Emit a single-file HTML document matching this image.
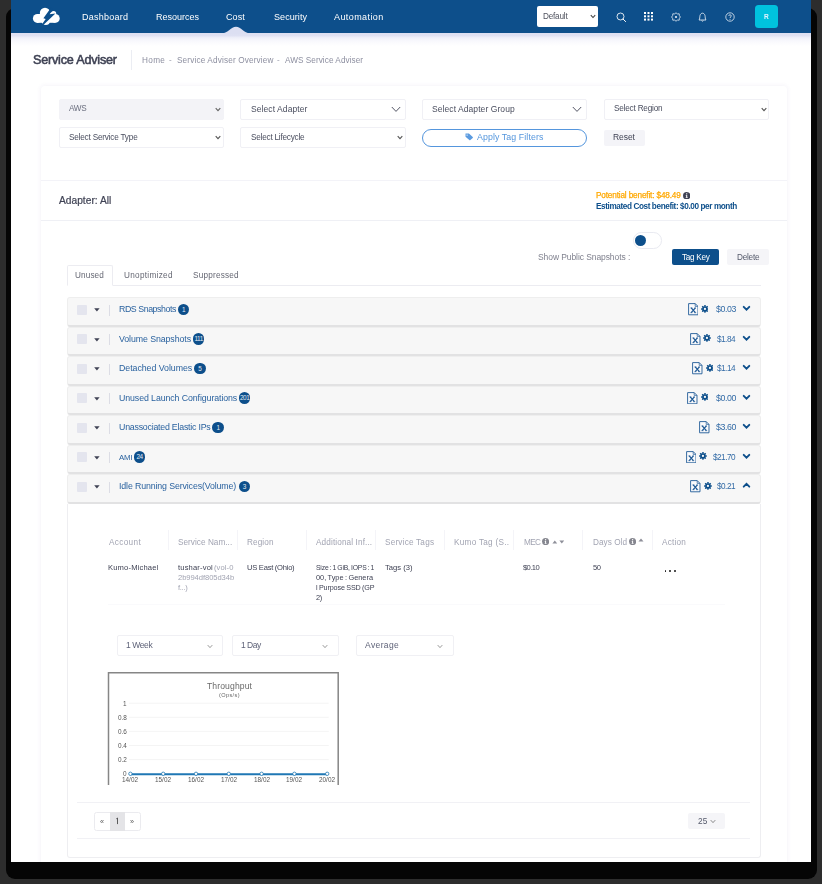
<!DOCTYPE html>
<html>
<head>
<meta charset="utf-8">
<title>Service Adviser</title>
<style>
*{box-sizing:border-box;margin:0;padding:0}
html,body{width:822px;height:884px;overflow:hidden;background:#2d2d2d;font-family:"Liberation Sans",sans-serif;}
#cv{position:absolute;left:0;top:0;width:822px;height:884px;overflow:hidden;background:#2d2d2d}
#cv *{position:absolute}
.shadow{left:5.5px;top:8px;width:811px;height:870.5px;background:#050505;border-radius:9px}
.page{left:11px;top:0;width:800px;height:862px;background:#fff;overflow:hidden}
.nav{left:11px;top:0;width:800px;height:33px;background:#0d4f8b}
.navfade{left:11px;top:33px;width:800px;height:13px;background:linear-gradient(#dcdff2 0,#dfe1f3 20%,#eeeff9 36%,#f8f8fd 60%,#fff 100%)}
.t{white-space:nowrap;line-height:1;will-change:transform}
.card{background:#fff;border-radius:4px;box-shadow:0 0 4px 1px rgba(82,63,140,.055)}
.sel{height:21px;border:1px solid #f0f0f5;border-radius:2px;background:#fff}
.row{left:67px;width:693.5px;height:29.5px;background:#f7f7f7;border:1px solid #eeeeee;border-bottom:2px solid #e2e2e3;border-radius:3px}
.cb{left:77px;width:10px;height:10px;background:#e4e5ee;border-radius:1px}
.sep{left:109px;width:1px;height:11px;background:#dcdde5}
.badge{width:11.6px;height:11.6px;border-radius:50%;background:#0d4f8b;color:#e4ecf4;font-size:6.4px;text-align:center;line-height:11.6px;letter-spacing:-0.4px;overflow:hidden}
.vs{top:530px;width:1px;height:20px;background:#f4f4f8}
.hl{height:1px;background:#eeeef3}

</style>
</head>
<body>
<div id="cv">
<div class="shadow"></div>
<div class="page"><div id="in" style="left:-11px;top:0;width:822px;height:884px">
<div class="nav"></div><div class="navfade"></div>
<svg style="left:222px;top:26px" width="28" height="8" viewBox="0 0 28 8"><path d="M0 7.3 C6 7.3 9 0.8 14 0.8 C19 0.8 22 7.3 28 7.3 L28 8 L0 8 Z" fill="#dcdff2"/></svg>
<svg style="left:31px;top:6px" width="31" height="21" viewBox="31 6 31 21">
<g fill="#fff"><circle cx="37.4" cy="18.4" r="4.5"/><circle cx="45.0" cy="12.9" r="5.2"/><circle cx="55.3" cy="18.4" r="4.4"/><circle cx="53.6" cy="13.6" r="2.6"/><circle cx="45.8" cy="21" r="4.1"/><rect x="37" y="14" width="18.5" height="8.8"/><circle cx="51" cy="16" r="3.5"/></g>
<path d="M51.2 7.6 L52.8 9.2 L49.7 14.3 L55.4 13.4 L42.8 25.6 L41.7 24.8 L45.7 19.0 L43.4 18.2 Z" fill="#0d4f8b"/>
</svg>
<div style="left:537px;top:6px;width:61px;height:20.5px;background:#fff;border-radius:2px"></div>
<svg style="left:589.8px;top:13.8px" width="6" height="5" viewBox="0 0 6 5"><path d="M0.8 1.1 L3 3.5 L5.2 1.1" fill="none" stroke="#444" stroke-width="1.1"/></svg>
<svg style="left:616px;top:11.5px" width="11" height="11" viewBox="0 0 11 11"><circle cx="4.5" cy="4.5" r="3.5" fill="none" stroke="#fff" stroke-width="0.85"/><path d="M7 7 L9.6 9.6" stroke="#fff" stroke-width="1" stroke-linecap="round"/></svg>
<svg style="left:643.8px;top:12.3px" width="10" height="9" viewBox="0 0 10 9"><g fill="#fff"><rect x="0" y="0" width="2" height="2"/><rect x="3.5" y="0" width="2" height="2"/><rect x="7" y="0" width="2" height="2"/><rect x="0" y="3.3" width="2" height="2"/><rect x="3.5" y="3.3" width="2" height="2"/><rect x="7" y="3.3" width="2" height="2"/><rect x="0" y="6.6" width="2" height="2"/><rect x="3.5" y="6.6" width="2" height="2"/><rect x="7" y="6.6" width="2" height="2"/></g></svg>
<svg style="left:670.5px;top:11.6px" width="10" height="10" viewBox="0 0 10 10"><path d="M5 0.8 L6.4 1.9 L8.2 1.8 L8.4 3.6 L9.4 5 L8.4 6.4 L8.2 8.2 L6.4 8.1 L5 9.2 L3.6 8.1 L1.8 8.2 L1.6 6.4 L0.6 5 L1.6 3.6 L1.8 1.8 L3.6 1.9 Z" fill="none" stroke="#e6edf5" stroke-width="0.8"/><circle cx="5" cy="5" r="1.1" fill="#e6edf5"/></svg>
<svg style="left:697.8px;top:11.7px" width="9" height="10" viewBox="0 0 9 10"><path d="M1 8 C2 7 1.6 5 2 3.6 C2.4 2 3.4 1.2 4.5 1.2 C5.6 1.2 6.6 2 7 3.6 C7.4 5 7 7 8 8 Z" fill="none" stroke="#e6edf5" stroke-width="0.85" stroke-linejoin="round"/><path d="M3.6 8.6 C3.8 9.4 5.2 9.4 5.4 8.6" fill="none" stroke="#e6edf5" stroke-width="0.8"/></svg>
<svg style="left:724.5px;top:11.6px" width="10" height="10" viewBox="0 0 10 10"><circle cx="5" cy="5" r="4.2" fill="none" stroke="#e6edf5" stroke-width="0.8"/><path d="M3.7 3.9 C3.7 2.4 6.3 2.4 6.3 3.9 C6.3 4.9 5 4.9 5 6" fill="none" stroke="#e6edf5" stroke-width="0.8"/><circle cx="5" cy="7.3" r="0.5" fill="#e6edf5"/></svg>
<div style="left:755.3px;top:5px;width:22.6px;height:22.8px;background:#00c2de;border-radius:3.5px"></div>
<div style="left:131px;top:50px;width:1px;height:20px;background:#ebedf3"></div>
<div class="card" style="left:41px;top:86px;width:745.5px;height:800px"></div>
<div class="hl" style="left:41px;top:180px;width:745.5px;background:#f3f3f8"></div>
<div class="sel" style="left:58.5px;top:98.5px;width:165.5px;background:#f3f3f7;border-color:#f3f3f7"></div><svg style="left:215px;top:106.5px" width="6" height="5" viewBox="0 0 6 5"><path d="M0.7 1.1 L3 3.6 L5.3 1.1" fill="none" stroke="#666" stroke-width="1.1"/></svg>
<div class="sel" style="left:240px;top:98.5px;width:165.5px"></div><svg style="left:390.5px;top:105.5px" width="10" height="7" viewBox="0 0 10 7"><path d="M0.8 1 L5 5.4 L9.2 1" fill="none" stroke="#3f4254" stroke-width="0.9"/></svg>
<div class="sel" style="left:422px;top:98.5px;width:165px"></div><svg style="left:572px;top:105.5px" width="10" height="7" viewBox="0 0 10 7"><path d="M0.8 1 L5 5.4 L9.2 1" fill="none" stroke="#3f4254" stroke-width="0.9"/></svg>
<div class="sel" style="left:603.5px;top:98.5px;width:165.5px"></div><svg style="left:760.5px;top:106.5px" width="6" height="5" viewBox="0 0 6 5"><path d="M0.7 1.1 L3 3.6 L5.3 1.1" fill="none" stroke="#555" stroke-width="1.1"/></svg>
<div class="sel" style="left:58.5px;top:127px;width:165.5px"></div><svg style="left:215px;top:135px" width="6" height="5" viewBox="0 0 6 5"><path d="M0.7 1.1 L3 3.6 L5.3 1.1" fill="none" stroke="#555" stroke-width="1.1"/></svg>
<div class="sel" style="left:240px;top:127px;width:165.5px"></div><svg style="left:396.5px;top:135px" width="6" height="5" viewBox="0 0 6 5"><path d="M0.7 1.1 L3 3.6 L5.3 1.1" fill="none" stroke="#555" stroke-width="1.1"/></svg>
<div style="left:421.5px;top:128.5px;width:165.5px;height:18px;border:1px solid #5596dd;border-radius:9px;background:#fff"></div>
<svg style="left:465px;top:133.2px" width="8.6" height="7.8" viewBox="0 0 10 9"><path d="M0.6 0.6 L4.6 0.6 L9 4.6 C9.4 5 9.4 5.4 9 5.8 L6.2 8.2 C5.8 8.6 5.4 8.6 5 8.2 L0.6 4.2 Z" fill="#5b9be0"/><circle cx="2.4" cy="2.4" r="0.8" fill="#fff"/></svg>
<div style="left:603.5px;top:130px;width:41px;height:15.5px;background:#f4f4f8;border-radius:2px"></div>
<div class="hl" style="left:41px;top:220px;width:746px;background:#eff0f5"></div>
<svg style="left:682.6999999999999px;top:191.60000000000002px" width="7.4" height="7.4" viewBox="0 0 10 10"><circle cx="5" cy="5" r="5" fill="#3f4254"/><rect x="4.3" y="4.2" width="1.4" height="3.6" fill="#fff"/><rect x="3.7" y="4.2" width="1.2" height="0.8" fill="#fff"/><rect x="3.6" y="7.2" width="2.8" height="0.8" fill="#fff"/><circle cx="5" cy="2.5" r="0.95" fill="#fff"/></svg>
<div style="left:632.5px;top:232px;width:29.5px;height:16.6px;border:1px solid #e9eaf1;border-radius:8.3px;background:#fff"></div>
<div style="left:634.7px;top:234.5px;width:11.5px;height:11.5px;border-radius:50%;background:#0d4f8b"></div>
<div style="left:672px;top:249.3px;width:47px;height:15.5px;background:#0d4f8b;border-radius:2px"></div>
<div style="left:727.2px;top:249.3px;width:41.5px;height:15.5px;background:#f5f5f8;border-radius:2px"></div>
<div class="hl" style="left:67px;top:285px;width:693.5px;background:#ececf1"></div>
<div style="left:67.3px;top:265.2px;width:45.4px;height:20.8px;border:1px solid #ececf1;border-bottom:1px solid #fff;border-radius:2px 2px 0 0;background:#fff"></div>
<div class="row" style="top:297.0px"></div>
<div class="cb" style="top:304.5px"></div>
<svg style="left:93.8px;top:308.0px" width="6" height="4" viewBox="0 0 6 4"><path d="M0.2 0.3 L5.6 0.3 L2.9 3.4 Z" fill="#3f4254"/></svg>
<div class="sep" style="top:304.5px"></div>
<div class="badge" style="left:177.89999999999998px;top:303.6px">1</div>
<svg style="left:687.7px;top:303.4px" width="10.6" height="12.4" viewBox="0 0 10.6 12.4"><path d="M0.6 0.6 L7.2 0.6 L10 3.4 L10 11.8 L0.6 11.8 Z" fill="#fbfbfc" stroke="#1f5a96" stroke-width="0.9" stroke-linejoin="round"/><path d="M7.2 0.6 L7.2 3.4 L10 3.4" fill="none" stroke="#1f5a96" stroke-width="0.7"/><path d="M3.2 4.9 L7.4 9.7 M7.4 4.9 L3.2 9.7" stroke="#1f5a96" stroke-width="1.3"/><path d="M2.4 9.7 L4.4 9.7 M6.2 9.7 L8.2 9.7 M2.4 4.9 L4.4 4.9 M6.4 4.9 L8.0 4.9" stroke="#1f5a96" stroke-width="0.7"/></svg>
<svg style="left:700.6px;top:304.9px" width="7.9" height="7.9" viewBox="0 0 10 10"><g fill="#0d4f8b"><rect x="4.1" y="0.1" width="1.8" height="2.2" rx="0.3" transform="rotate(0 5 5)"/><rect x="4.1" y="0.1" width="1.8" height="2.2" rx="0.3" transform="rotate(45 5 5)"/><rect x="4.1" y="0.1" width="1.8" height="2.2" rx="0.3" transform="rotate(90 5 5)"/><rect x="4.1" y="0.1" width="1.8" height="2.2" rx="0.3" transform="rotate(135 5 5)"/><rect x="4.1" y="0.1" width="1.8" height="2.2" rx="0.3" transform="rotate(180 5 5)"/><rect x="4.1" y="0.1" width="1.8" height="2.2" rx="0.3" transform="rotate(225 5 5)"/><rect x="4.1" y="0.1" width="1.8" height="2.2" rx="0.3" transform="rotate(270 5 5)"/><rect x="4.1" y="0.1" width="1.8" height="2.2" rx="0.3" transform="rotate(315 5 5)"/><circle cx="5" cy="5" r="3.5"/></g><circle cx="5" cy="5" r="1.45" fill="#f7f7f7"/></svg>
<svg style="left:741.8px;top:305.1px" width="9" height="7" viewBox="0 0 9 7"><path d="M1.7 1.8 L4.5 4.6 L7.3 1.8" fill="none" stroke="#0d4f8b" stroke-width="1.9" stroke-linecap="round"/></svg>
<div class="row" style="top:326.5px"></div>
<div class="cb" style="top:334.0px"></div>
<svg style="left:93.8px;top:337.5px" width="6" height="4" viewBox="0 0 6 4"><path d="M0.2 0.3 L5.6 0.3 L2.9 3.4 Z" fill="#3f4254"/></svg>
<div class="sep" style="top:334.0px"></div>
<div class="badge" style="left:192.89999999999998px;top:333.1px">111</div>
<svg style="left:690px;top:332.9px" width="10.6" height="12.4" viewBox="0 0 10.6 12.4"><path d="M0.6 0.6 L7.2 0.6 L10 3.4 L10 11.8 L0.6 11.8 Z" fill="#fbfbfc" stroke="#1f5a96" stroke-width="0.9" stroke-linejoin="round"/><path d="M7.2 0.6 L7.2 3.4 L10 3.4" fill="none" stroke="#1f5a96" stroke-width="0.7"/><path d="M3.2 4.9 L7.4 9.7 M7.4 4.9 L3.2 9.7" stroke="#1f5a96" stroke-width="1.3"/><path d="M2.4 9.7 L4.4 9.7 M6.2 9.7 L8.2 9.7 M2.4 4.9 L4.4 4.9 M6.4 4.9 L8.0 4.9" stroke="#1f5a96" stroke-width="0.7"/></svg>
<svg style="left:703.1px;top:334.4px" width="7.9" height="7.9" viewBox="0 0 10 10"><g fill="#0d4f8b"><rect x="4.1" y="0.1" width="1.8" height="2.2" rx="0.3" transform="rotate(0 5 5)"/><rect x="4.1" y="0.1" width="1.8" height="2.2" rx="0.3" transform="rotate(45 5 5)"/><rect x="4.1" y="0.1" width="1.8" height="2.2" rx="0.3" transform="rotate(90 5 5)"/><rect x="4.1" y="0.1" width="1.8" height="2.2" rx="0.3" transform="rotate(135 5 5)"/><rect x="4.1" y="0.1" width="1.8" height="2.2" rx="0.3" transform="rotate(180 5 5)"/><rect x="4.1" y="0.1" width="1.8" height="2.2" rx="0.3" transform="rotate(225 5 5)"/><rect x="4.1" y="0.1" width="1.8" height="2.2" rx="0.3" transform="rotate(270 5 5)"/><rect x="4.1" y="0.1" width="1.8" height="2.2" rx="0.3" transform="rotate(315 5 5)"/><circle cx="5" cy="5" r="3.5"/></g><circle cx="5" cy="5" r="1.45" fill="#f7f7f7"/></svg>
<svg style="left:741.8px;top:334.6px" width="9" height="7" viewBox="0 0 9 7"><path d="M1.7 1.8 L4.5 4.6 L7.3 1.8" fill="none" stroke="#0d4f8b" stroke-width="1.9" stroke-linecap="round"/></svg>
<div class="row" style="top:356.0px"></div>
<div class="cb" style="top:363.5px"></div>
<svg style="left:93.8px;top:367.0px" width="6" height="4" viewBox="0 0 6 4"><path d="M0.2 0.3 L5.6 0.3 L2.9 3.4 Z" fill="#3f4254"/></svg>
<div class="sep" style="top:363.5px"></div>
<div class="badge" style="left:194.0px;top:362.6px">5</div>
<svg style="left:692.3px;top:362.4px" width="10.6" height="12.4" viewBox="0 0 10.6 12.4"><path d="M0.6 0.6 L7.2 0.6 L10 3.4 L10 11.8 L0.6 11.8 Z" fill="#fbfbfc" stroke="#1f5a96" stroke-width="0.9" stroke-linejoin="round"/><path d="M7.2 0.6 L7.2 3.4 L10 3.4" fill="none" stroke="#1f5a96" stroke-width="0.7"/><path d="M3.2 4.9 L7.4 9.7 M7.4 4.9 L3.2 9.7" stroke="#1f5a96" stroke-width="1.3"/><path d="M2.4 9.7 L4.4 9.7 M6.2 9.7 L8.2 9.7 M2.4 4.9 L4.4 4.9 M6.4 4.9 L8.0 4.9" stroke="#1f5a96" stroke-width="0.7"/></svg>
<svg style="left:705.5px;top:363.9px" width="7.9" height="7.9" viewBox="0 0 10 10"><g fill="#0d4f8b"><rect x="4.1" y="0.1" width="1.8" height="2.2" rx="0.3" transform="rotate(0 5 5)"/><rect x="4.1" y="0.1" width="1.8" height="2.2" rx="0.3" transform="rotate(45 5 5)"/><rect x="4.1" y="0.1" width="1.8" height="2.2" rx="0.3" transform="rotate(90 5 5)"/><rect x="4.1" y="0.1" width="1.8" height="2.2" rx="0.3" transform="rotate(135 5 5)"/><rect x="4.1" y="0.1" width="1.8" height="2.2" rx="0.3" transform="rotate(180 5 5)"/><rect x="4.1" y="0.1" width="1.8" height="2.2" rx="0.3" transform="rotate(225 5 5)"/><rect x="4.1" y="0.1" width="1.8" height="2.2" rx="0.3" transform="rotate(270 5 5)"/><rect x="4.1" y="0.1" width="1.8" height="2.2" rx="0.3" transform="rotate(315 5 5)"/><circle cx="5" cy="5" r="3.5"/></g><circle cx="5" cy="5" r="1.45" fill="#f7f7f7"/></svg>
<svg style="left:741.8px;top:364.1px" width="9" height="7" viewBox="0 0 9 7"><path d="M1.7 1.8 L4.5 4.6 L7.3 1.8" fill="none" stroke="#0d4f8b" stroke-width="1.9" stroke-linecap="round"/></svg>
<div class="row" style="top:385.5px"></div>
<div class="cb" style="top:393.0px"></div>
<svg style="left:93.8px;top:396.5px" width="6" height="4" viewBox="0 0 6 4"><path d="M0.2 0.3 L5.6 0.3 L2.9 3.4 Z" fill="#3f4254"/></svg>
<div class="sep" style="top:393.0px"></div>
<div class="badge" style="left:238.89999999999998px;top:392.1px">201</div>
<svg style="left:687.1px;top:391.9px" width="10.6" height="12.4" viewBox="0 0 10.6 12.4"><path d="M0.6 0.6 L7.2 0.6 L10 3.4 L10 11.8 L0.6 11.8 Z" fill="#fbfbfc" stroke="#1f5a96" stroke-width="0.9" stroke-linejoin="round"/><path d="M7.2 0.6 L7.2 3.4 L10 3.4" fill="none" stroke="#1f5a96" stroke-width="0.7"/><path d="M3.2 4.9 L7.4 9.7 M7.4 4.9 L3.2 9.7" stroke="#1f5a96" stroke-width="1.3"/><path d="M2.4 9.7 L4.4 9.7 M6.2 9.7 L8.2 9.7 M2.4 4.9 L4.4 4.9 M6.4 4.9 L8.0 4.9" stroke="#1f5a96" stroke-width="0.7"/></svg>
<svg style="left:700.6px;top:393.4px" width="7.9" height="7.9" viewBox="0 0 10 10"><g fill="#0d4f8b"><rect x="4.1" y="0.1" width="1.8" height="2.2" rx="0.3" transform="rotate(0 5 5)"/><rect x="4.1" y="0.1" width="1.8" height="2.2" rx="0.3" transform="rotate(45 5 5)"/><rect x="4.1" y="0.1" width="1.8" height="2.2" rx="0.3" transform="rotate(90 5 5)"/><rect x="4.1" y="0.1" width="1.8" height="2.2" rx="0.3" transform="rotate(135 5 5)"/><rect x="4.1" y="0.1" width="1.8" height="2.2" rx="0.3" transform="rotate(180 5 5)"/><rect x="4.1" y="0.1" width="1.8" height="2.2" rx="0.3" transform="rotate(225 5 5)"/><rect x="4.1" y="0.1" width="1.8" height="2.2" rx="0.3" transform="rotate(270 5 5)"/><rect x="4.1" y="0.1" width="1.8" height="2.2" rx="0.3" transform="rotate(315 5 5)"/><circle cx="5" cy="5" r="3.5"/></g><circle cx="5" cy="5" r="1.45" fill="#f7f7f7"/></svg>
<svg style="left:741.8px;top:393.6px" width="9" height="7" viewBox="0 0 9 7"><path d="M1.7 1.8 L4.5 4.6 L7.3 1.8" fill="none" stroke="#0d4f8b" stroke-width="1.9" stroke-linecap="round"/></svg>
<div class="row" style="top:415.0px"></div>
<div class="cb" style="top:422.5px"></div>
<svg style="left:93.8px;top:426.0px" width="6" height="4" viewBox="0 0 6 4"><path d="M0.2 0.3 L5.6 0.3 L2.9 3.4 Z" fill="#3f4254"/></svg>
<div class="sep" style="top:422.5px"></div>
<div class="badge" style="left:212.2px;top:421.6px">1</div>
<svg style="left:699px;top:421.4px" width="10.6" height="12.4" viewBox="0 0 10.6 12.4"><path d="M0.6 0.6 L7.2 0.6 L10 3.4 L10 11.8 L0.6 11.8 Z" fill="#fbfbfc" stroke="#1f5a96" stroke-width="0.9" stroke-linejoin="round"/><path d="M7.2 0.6 L7.2 3.4 L10 3.4" fill="none" stroke="#1f5a96" stroke-width="0.7"/><path d="M3.2 4.9 L7.4 9.7 M7.4 4.9 L3.2 9.7" stroke="#1f5a96" stroke-width="1.3"/><path d="M2.4 9.7 L4.4 9.7 M6.2 9.7 L8.2 9.7 M2.4 4.9 L4.4 4.9 M6.4 4.9 L8.0 4.9" stroke="#1f5a96" stroke-width="0.7"/></svg>
<svg style="left:741.8px;top:423.1px" width="9" height="7" viewBox="0 0 9 7"><path d="M1.7 1.8 L4.5 4.6 L7.3 1.8" fill="none" stroke="#0d4f8b" stroke-width="1.9" stroke-linecap="round"/></svg>
<div class="row" style="top:444.5px"></div>
<div class="cb" style="top:452.0px"></div>
<svg style="left:93.8px;top:455.5px" width="6" height="4" viewBox="0 0 6 4"><path d="M0.2 0.3 L5.6 0.3 L2.9 3.4 Z" fill="#3f4254"/></svg>
<div class="sep" style="top:452.0px"></div>
<div class="badge" style="left:133.79999999999998px;top:451.1px">24</div>
<svg style="left:685.6px;top:450.9px" width="10.6" height="12.4" viewBox="0 0 10.6 12.4"><path d="M0.6 0.6 L7.2 0.6 L10 3.4 L10 11.8 L0.6 11.8 Z" fill="#fbfbfc" stroke="#1f5a96" stroke-width="0.9" stroke-linejoin="round"/><path d="M7.2 0.6 L7.2 3.4 L10 3.4" fill="none" stroke="#1f5a96" stroke-width="0.7"/><path d="M3.2 4.9 L7.4 9.7 M7.4 4.9 L3.2 9.7" stroke="#1f5a96" stroke-width="1.3"/><path d="M2.4 9.7 L4.4 9.7 M6.2 9.7 L8.2 9.7 M2.4 4.9 L4.4 4.9 M6.4 4.9 L8.0 4.9" stroke="#1f5a96" stroke-width="0.7"/></svg>
<svg style="left:699.1px;top:452.4px" width="7.9" height="7.9" viewBox="0 0 10 10"><g fill="#0d4f8b"><rect x="4.1" y="0.1" width="1.8" height="2.2" rx="0.3" transform="rotate(0 5 5)"/><rect x="4.1" y="0.1" width="1.8" height="2.2" rx="0.3" transform="rotate(45 5 5)"/><rect x="4.1" y="0.1" width="1.8" height="2.2" rx="0.3" transform="rotate(90 5 5)"/><rect x="4.1" y="0.1" width="1.8" height="2.2" rx="0.3" transform="rotate(135 5 5)"/><rect x="4.1" y="0.1" width="1.8" height="2.2" rx="0.3" transform="rotate(180 5 5)"/><rect x="4.1" y="0.1" width="1.8" height="2.2" rx="0.3" transform="rotate(225 5 5)"/><rect x="4.1" y="0.1" width="1.8" height="2.2" rx="0.3" transform="rotate(270 5 5)"/><rect x="4.1" y="0.1" width="1.8" height="2.2" rx="0.3" transform="rotate(315 5 5)"/><circle cx="5" cy="5" r="3.5"/></g><circle cx="5" cy="5" r="1.45" fill="#f7f7f7"/></svg>
<svg style="left:741.8px;top:452.6px" width="9" height="7" viewBox="0 0 9 7"><path d="M1.7 1.8 L4.5 4.6 L7.3 1.8" fill="none" stroke="#0d4f8b" stroke-width="1.9" stroke-linecap="round"/></svg>
<div class="row" style="top:474.0px"></div>
<div class="cb" style="top:481.5px"></div>
<svg style="left:93.8px;top:485.0px" width="6" height="4" viewBox="0 0 6 4"><path d="M0.2 0.3 L5.6 0.3 L2.9 3.4 Z" fill="#3f4254"/></svg>
<div class="sep" style="top:481.5px"></div>
<div class="badge" style="left:238.5px;top:480.6px">3</div>
<svg style="left:690.2px;top:480.4px" width="10.6" height="12.4" viewBox="0 0 10.6 12.4"><path d="M0.6 0.6 L7.2 0.6 L10 3.4 L10 11.8 L0.6 11.8 Z" fill="#fbfbfc" stroke="#1f5a96" stroke-width="0.9" stroke-linejoin="round"/><path d="M7.2 0.6 L7.2 3.4 L10 3.4" fill="none" stroke="#1f5a96" stroke-width="0.7"/><path d="M3.2 4.9 L7.4 9.7 M7.4 4.9 L3.2 9.7" stroke="#1f5a96" stroke-width="1.3"/><path d="M2.4 9.7 L4.4 9.7 M6.2 9.7 L8.2 9.7 M2.4 4.9 L4.4 4.9 M6.4 4.9 L8.0 4.9" stroke="#1f5a96" stroke-width="0.7"/></svg>
<svg style="left:703.7px;top:481.9px" width="7.9" height="7.9" viewBox="0 0 10 10"><g fill="#0d4f8b"><rect x="4.1" y="0.1" width="1.8" height="2.2" rx="0.3" transform="rotate(0 5 5)"/><rect x="4.1" y="0.1" width="1.8" height="2.2" rx="0.3" transform="rotate(45 5 5)"/><rect x="4.1" y="0.1" width="1.8" height="2.2" rx="0.3" transform="rotate(90 5 5)"/><rect x="4.1" y="0.1" width="1.8" height="2.2" rx="0.3" transform="rotate(135 5 5)"/><rect x="4.1" y="0.1" width="1.8" height="2.2" rx="0.3" transform="rotate(180 5 5)"/><rect x="4.1" y="0.1" width="1.8" height="2.2" rx="0.3" transform="rotate(225 5 5)"/><rect x="4.1" y="0.1" width="1.8" height="2.2" rx="0.3" transform="rotate(270 5 5)"/><rect x="4.1" y="0.1" width="1.8" height="2.2" rx="0.3" transform="rotate(315 5 5)"/><circle cx="5" cy="5" r="3.5"/></g><circle cx="5" cy="5" r="1.45" fill="#f7f7f7"/></svg>
<svg style="left:741.8px;top:482.1px" width="9" height="7" viewBox="0 0 9 7"><path d="M1.7 4.7 L4.5 1.9 L7.3 4.7" fill="none" stroke="#0d4f8b" stroke-width="1.9" stroke-linecap="round"/></svg>
<div style="left:67px;top:503.5px;width:693.5px;height:354.0px;border:1px solid #eeeef1;border-top:none;border-radius:0 0 3px 3px;background:#fff"></div>
<div class="vs" style="left:167.6px"></div>
<div class="vs" style="left:237.0px"></div>
<div class="vs" style="left:306.1px"></div>
<div class="vs" style="left:374.9px"></div>
<div class="vs" style="left:444.3px"></div>
<div class="vs" style="left:512.9px"></div>
<div class="vs" style="left:582.2px"></div>
<div class="vs" style="left:652.1px"></div>
<div class="hl" style="left:108px;top:604.3px;width:617px;background:#fafafc"></div>
<svg style="left:542.3px;top:537.9px" width="7.2" height="7.2" viewBox="0 0 10 10"><circle cx="5" cy="5" r="5" fill="#85868f"/><rect x="4.3" y="4.2" width="1.4" height="3.6" fill="#fff"/><rect x="3.7" y="4.2" width="1.2" height="0.8" fill="#fff"/><rect x="3.6" y="7.2" width="2.8" height="0.8" fill="#fff"/><circle cx="5" cy="2.5" r="0.95" fill="#fff"/></svg>
<svg style="left:629.1px;top:537.9px" width="7.2" height="7.2" viewBox="0 0 10 10"><circle cx="5" cy="5" r="5" fill="#85868f"/><rect x="4.3" y="4.2" width="1.4" height="3.6" fill="#fff"/><rect x="3.7" y="4.2" width="1.2" height="0.8" fill="#fff"/><rect x="3.6" y="7.2" width="2.8" height="0.8" fill="#fff"/><circle cx="5" cy="2.5" r="0.95" fill="#fff"/></svg>
<svg style="left:552px;top:539.7px" width="5.6" height="4" viewBox="0 0 5 4"><path d="M0.1 3.4 L4.9 3.4 L2.5 0.5 Z" fill="#8e8f99"/></svg>
<svg style="left:558.6px;top:539.9px" width="5.6" height="4" viewBox="0 0 5 4"><path d="M0.1 0.6 L4.9 0.6 L2.5 3.5 Z" fill="#8e8f99"/></svg>
<svg style="left:638.2px;top:537.6px" width="6" height="4.2" viewBox="0 0 5 4"><path d="M0.1 3.4 L4.9 3.4 L2.5 0.5 Z" fill="#8e8f99"/></svg>
<div style="left:664.55px;top:570.3px;width:1.9px;height:1.9px;border-radius:50%;background:#1a1a1a"></div>
<div style="left:669.25px;top:570.3px;width:1.9px;height:1.9px;border-radius:50%;background:#1a1a1a"></div>
<div style="left:673.8499999999999px;top:570.3px;width:1.9px;height:1.9px;border-radius:50%;background:#1a1a1a"></div>
<div style="left:117.2px;top:635.3px;width:106.3px;height:20.5px;border:1px solid #f0f0f4;border-radius:2px;background:#fff"></div><svg style="left:206.5px;top:643.5px" width="6" height="5" viewBox="0 0 6 5"><path d="M0.7 1.1 L3 3.6 L5.3 1.1" fill="none" stroke="#777" stroke-width="0.75"/></svg>
<div style="left:232px;top:635.3px;width:107px;height:20.5px;border:1px solid #f0f0f4;border-radius:2px;background:#fff"></div><svg style="left:322px;top:643.5px" width="6" height="5" viewBox="0 0 6 5"><path d="M0.7 1.1 L3 3.6 L5.3 1.1" fill="none" stroke="#777" stroke-width="0.75"/></svg>
<div style="left:356.4px;top:635.3px;width:97.2px;height:20.5px;border:1px solid #f0f0f4;border-radius:2px;background:#fff"></div><svg style="left:436.59999999999997px;top:643.5px" width="6" height="5" viewBox="0 0 6 5"><path d="M0.7 1.1 L3 3.6 L5.3 1.1" fill="none" stroke="#777" stroke-width="0.75"/></svg>
<svg style="left:107px;top:671px" width="233" height="114" viewBox="107 671 233 114">
<path d="M108.5 785 L108.5 672.7 L338.2 672.7 L338.2 785" fill="#fff" stroke="#868686" stroke-width="1.5"/>
<g stroke="#ececec" stroke-width="0.6"><path d="M129 703.2H328.7"/><path d="M129 717.3H328.7"/><path d="M129 731.4H328.7"/><path d="M129 745.5H328.7"/><path d="M129 759.6H328.7"/></g>
<path d="M130.4 774.2 H327.2" stroke="#1f77b4" stroke-width="2"/>
<g fill="#fff" stroke="#1f77b4" stroke-width="0.8"><circle cx="130.4" cy="773.8" r="1.7"/><circle cx="163.2" cy="773.8" r="1.7"/><circle cx="196" cy="773.8" r="1.7"/><circle cx="228.8" cy="773.8" r="1.7"/><circle cx="261.6" cy="773.8" r="1.7"/><circle cx="294.4" cy="773.8" r="1.7"/><circle cx="327.2" cy="773.8" r="1.7"/></g>
</svg>
<div class="hl" style="left:77px;top:802px;width:673px;background:#f1f1f5"></div>
<div class="hl" style="left:77px;top:837.5px;width:673px;background:#f1f1f5"></div>
<div style="left:94.2px;top:811.5px;width:46.6px;height:19px;border:1px solid #ebebef;border-radius:2.5px;background:#fff"></div>
<div style="left:110.2px;top:811.5px;width:14.6px;height:19px;background:#e4e4e7"></div><svg style="left:114px;top:815px" width="6" height="11" viewBox="0 0 6 11"><path d="M2.3 3.8 L3.5 3.0 L3.5 9.1" fill="none" stroke="#4a4a4a" stroke-width="0.9"/></svg>
<div style="left:687.7px;top:812.8px;width:37px;height:16.3px;background:#f5f5f8;border-radius:2px"></div><svg style="left:709.5px;top:819px" width="6" height="5" viewBox="0 0 6 5"><path d="M0.7 1.1 L3 3.6 L5.3 1.1" fill="none" stroke="#666" stroke-width="0.75"/></svg>
<div class="t" style="left:118.8px;top:305.00px;font-size:8.8px;color:#2a629f;letter-spacing:-0.439px;">RDS Snapshots</div>
<div class="t" style="right:86.10000000000002px;top:305.00px;font-size:8.8px;color:#336ba6;letter-spacing:-0.403px;margin-right:0.403px;">$0.03</div>
<div class="t" style="left:118.8px;top:335.00px;font-size:8.8px;color:#2a629f;letter-spacing:-0.088px;">Volume Snapshots</div>
<div class="t" style="right:86.10000000000002px;top:336.00px;font-size:8.2px;color:#336ba6;letter-spacing:-0.500px;margin-right:0.500px;">$1.84</div>
<div class="t" style="left:118.8px;top:364.00px;font-size:8.8px;color:#2a629f;letter-spacing:-0.042px;">Detached Volumes</div>
<div class="t" style="right:86.10000000000002px;top:365.00px;font-size:8.2px;color:#336ba6;letter-spacing:-0.500px;margin-right:0.500px;">$1.14</div>
<div class="t" style="left:118.8px;top:394.00px;font-size:8.8px;color:#2a629f;letter-spacing:-0.094px;">Unused Launch Configurations</div>
<div class="t" style="right:86.10000000000002px;top:394.00px;font-size:8.8px;color:#336ba6;letter-spacing:-0.403px;margin-right:0.403px;">$0.00</div>
<div class="t" style="left:118.8px;top:423.00px;font-size:8.8px;color:#2a629f;letter-spacing:-0.222px;">Unassociated Elastic IPs</div>
<div class="t" style="right:86.10000000000002px;top:423.00px;font-size:8.8px;color:#336ba6;letter-spacing:-0.403px;margin-right:0.403px;">$3.60</div>
<div class="t" style="left:118.8px;top:454.00px;font-size:7.8px;color:#2a629f;letter-spacing:-0.150px;">AMI</div>
<div class="t" style="right:86.10000000000002px;top:454.00px;font-size:8.2px;color:#336ba6;letter-spacing:-0.500px;margin-right:0.500px;">$21.70</div>
<div class="t" style="left:118.8px;top:482.00px;font-size:8.8px;color:#2a629f;letter-spacing:-0.126px;">Idle Running Services(Volume)</div>
<div class="t" style="right:86.10000000000002px;top:483.00px;font-size:8.2px;color:#336ba6;letter-spacing:-0.500px;margin-right:0.500px;">$0.21</div>
<div class="t" style="left:81.7px;top:13.00px;font-size:9px;color:#fff;letter-spacing:0.255px;">Dashboard</div>
<div class="t" style="left:155.6px;top:13.00px;font-size:9px;color:#fff;letter-spacing:-0.015px;">Resources</div>
<div class="t" style="left:226.4px;top:13.00px;font-size:9px;color:#fff;letter-spacing:0.081px;">Cost</div>
<div class="t" style="left:273.5px;top:13.00px;font-size:9px;color:#fff;letter-spacing:0.065px;">Security</div>
<div class="t" style="left:334px;top:13.00px;font-size:9px;color:#fff;letter-spacing:0.418px;">Automation</div>
<div class="t" style="left:542.8px;top:13.00px;font-size:8.2px;color:#50535f;letter-spacing:-0.208px;">Default</div>
<div class="t" style="left:764px;top:14.00px;font-size:6.6px;color:#dff3ff;font-weight:bold;">R</div>
<div class="t" style="left:33.1px;top:54.00px;font-size:12.6px;color:#3f4254;letter-spacing:-0.200px;-webkit-text-stroke:0.55px #3f4254;">Service Adviser</div>
<div class="t" style="left:141.5px;top:57.00px;font-size:8.2px;color:#8d8fa0;letter-spacing:0.330px;">Home</div>
<div class="t" style="left:168.7px;top:56.00px;font-size:8px;color:#8d8fa0;">-</div>
<div class="t" style="left:176.5px;top:57.00px;font-size:8.2px;color:#8d8fa0;letter-spacing:0.156px;">Service Adviser Overview</div>
<div class="t" style="left:277.2px;top:56.00px;font-size:8px;color:#8d8fa0;">-</div>
<div class="t" style="left:284.5px;top:57.00px;font-size:8.2px;color:#8d8fa0;letter-spacing:0.052px;">AWS Service Adviser</div>
<div class="t" style="left:68.9px;top:105.00px;font-size:8.2px;color:#6c7080;letter-spacing:-0.344px;">AWS</div>
<div class="t" style="left:68.9px;top:134.00px;font-size:8.2px;color:#4a4e5f;letter-spacing:-0.196px;">Select Service Type</div>
<div class="t" style="left:250.7px;top:105.00px;font-size:8.5px;color:#4a4e5f;letter-spacing:0.082px;">Select Adapter</div>
<div class="t" style="left:250.7px;top:134.00px;font-size:8.2px;color:#4a4e5f;letter-spacing:-0.219px;">Select Lifecycle</div>
<div class="t" style="left:432.4px;top:105.00px;font-size:8.5px;color:#4a4e5f;letter-spacing:0.073px;">Select Adapter Group</div>
<div class="t" style="left:613.8px;top:105.00px;font-size:8.2px;color:#4a4e5f;letter-spacing:-0.199px;">Select Region</div>
<div class="t" style="left:476.9px;top:133.00px;font-size:8.8px;color:#5596dd;letter-spacing:0.092px;">Apply Tag Filters</div>
<div class="t" style="left:613.4px;top:133.00px;font-size:8.5px;color:#3f4254;letter-spacing:-0.071px;">Reset</div>
<div class="t" style="left:59px;top:196.00px;font-size:10.2px;color:#3f4254;letter-spacing:0.017px;-webkit-text-stroke:0.2px #3f4254;">Adapter: All</div>
<div class="t" style="left:595.8px;top:192.00px;font-size:8.2px;color:#ffa800;letter-spacing:-0.147px;-webkit-text-stroke:0.25px #ffa800;">Potential benefit: $48.49</div>
<div class="t" style="left:595.8px;top:203.00px;font-size:8.2px;color:#0d4f8b;letter-spacing:-0.400px;font-weight:bold;">Estimated Cost benefit: $0.00 per month</div>
<div class="t" style="left:538.2px;top:253.00px;font-size:8.5px;color:#80828f;letter-spacing:-0.081px;">Show Public Snapshots :</div>
<div class="t" style="left:681.7px;top:254.00px;font-size:8.2px;color:#fff;letter-spacing:-0.291px;">Tag Key</div>
<div class="t" style="left:736.9px;top:254.00px;font-size:8.2px;color:#555a6b;letter-spacing:-0.231px;">Delete</div>
<div class="t" style="left:75.3px;top:272.00px;font-size:8.2px;color:#656773;letter-spacing:0.121px;">Unused</div>
<div class="t" style="left:124px;top:272.00px;font-size:8.2px;color:#656773;letter-spacing:0.294px;">Unoptimized</div>
<div class="t" style="left:192.6px;top:272.00px;font-size:8.2px;color:#656773;letter-spacing:0.210px;">Suppressed</div>
<div class="t" style="left:109px;top:539.00px;font-size:8.2px;color:#a2a4b2;letter-spacing:0.355px;">Account</div>
<div class="t" style="left:177.9px;top:539.00px;font-size:8.2px;color:#a2a4b2;letter-spacing:0.038px;">Service Nam...</div>
<div class="t" style="left:246.7px;top:539.00px;font-size:8.2px;color:#a2a4b2;letter-spacing:0.099px;">Region</div>
<div class="t" style="left:316.3px;top:539.00px;font-size:8.2px;color:#a2a4b2;letter-spacing:0.123px;">Additional Inf...</div>
<div class="t" style="left:385.2px;top:539.00px;font-size:8.2px;color:#a2a4b2;letter-spacing:0.206px;">Service Tags</div>
<div class="t" style="left:454px;top:539.00px;font-size:8.2px;color:#a2a4b2;letter-spacing:0.277px;">Kumo Tag (S..</div>
<div class="t" style="left:523.6px;top:539.00px;font-size:8.2px;color:#a2a4b2;letter-spacing:-0.600px;">MEC</div>
<div class="t" style="left:592.9px;top:539.00px;font-size:8.2px;color:#a2a4b2;letter-spacing:0.057px;">Days Old</div>
<div class="t" style="left:662.3px;top:539.00px;font-size:8.2px;color:#a2a4b2;letter-spacing:0.188px;">Action</div>
<div class="t" style="left:108px;top:564.00px;font-size:7.6px;color:#3f4254;letter-spacing:0.161px;">Kumo-Michael</div>
<div class="t" style="left:177.9px;top:564.00px;font-size:7.6px;color:#3f4254;letter-spacing:0.153px;">tushar-vol</div>
<div class="t" style="left:214.4px;top:564.00px;font-size:7.6px;color:#a2a4b2;letter-spacing:0.073px;">(vol-0</div>
<div class="t" style="left:177.9px;top:574.00px;font-size:7.6px;color:#a2a4b2;letter-spacing:-0.068px;">2b994df805d34b</div>
<div class="t" style="left:177.9px;top:584.00px;font-size:7.6px;color:#a2a4b2;letter-spacing:-0.304px;">f...)</div>
<div class="t" style="left:246.7px;top:564.00px;font-size:7.6px;color:#3f4254;letter-spacing:-0.264px;">US East (Ohio)</div>
<div class="t" style="left:316px;top:565.00px;font-size:6.8px;color:#3f4254;letter-spacing:-0.166px;word-spacing:-0.6px;">Size : 1 GiB, IOPS : 1</div>
<div class="t" style="left:316px;top:574.00px;font-size:7.4px;color:#3f4254;letter-spacing:-0.014px;word-spacing:-0.6px;">00, Type : Genera</div>
<div class="t" style="left:316px;top:584.00px;font-size:7.2px;color:#3f4254;letter-spacing:-0.134px;word-spacing:-0.4px;">l Purpose SSD (GP</div>
<div class="t" style="left:316px;top:594.00px;font-size:7.4px;color:#3f4254;letter-spacing:-0.385px;">2)</div>
<div class="t" style="left:385.2px;top:564.00px;font-size:7.6px;color:#3f4254;letter-spacing:0.008px;">Tags (3)</div>
<div class="t" style="left:523.1px;top:564.00px;font-size:7.6px;color:#3f4254;letter-spacing:-0.600px;">$0.10</div>
<div class="t" style="left:592.5px;top:564.00px;font-size:7.6px;color:#3f4254;letter-spacing:-0.502px;">50</div>
<div class="t" style="left:126px;top:641.00px;font-size:8.5px;color:#5e6278;letter-spacing:-0.395px;">1 Week</div>
<div class="t" style="left:241px;top:641.00px;font-size:8.5px;color:#5e6278;letter-spacing:-0.493px;">1 Day</div>
<div class="t" style="left:364.5px;top:641.00px;font-size:8.5px;color:#5e6278;letter-spacing:0.382px;">Average</div>
<div class="t" style="left:206.5px;top:682.00px;font-size:8.6px;color:#6a6a6a;letter-spacing:0.109px;">Throughput</div>
<div class="t" style="left:218.5px;top:693.00px;font-size:5.6px;color:#666;letter-spacing:0.362px;">(Ops/s)</div>
<div class="t" style="left:100.3px;top:818.00px;font-size:7.2px;color:#555;">«</div>
<div class="t" style="left:130.4px;top:818.00px;font-size:7.2px;color:#555;">»</div>
<div class="t" style="left:697.5px;top:817.00px;font-size:8.3px;color:#555a6b;letter-spacing:0.177px;">25</div>
<div class="t" style="right:695.4px;top:701.00px;font-size:6.4px;color:#555;">1</div>
<div class="t" style="right:695.4px;top:715.00px;font-size:6.4px;color:#555;">0.8</div>
<div class="t" style="right:695.4px;top:729.00px;font-size:6.4px;color:#555;">0.6</div>
<div class="t" style="right:695.4px;top:743.00px;font-size:6.4px;color:#555;">0.4</div>
<div class="t" style="right:695.4px;top:757.00px;font-size:6.4px;color:#555;">0.2</div>
<div class="t" style="right:695.4px;top:771.00px;font-size:6.4px;color:#555;">0</div>
<div class="t" style="left:122.4px;top:777.00px;font-size:6.4px;color:#555;letter-spacing:0.000px;">14/02</div>
<div class="t" style="left:155.2px;top:777.00px;font-size:6.4px;color:#555;letter-spacing:0.000px;">15/02</div>
<div class="t" style="left:188px;top:777.00px;font-size:6.4px;color:#555;letter-spacing:0.000px;">16/02</div>
<div class="t" style="left:220.8px;top:777.00px;font-size:6.4px;color:#555;letter-spacing:0.000px;">17/02</div>
<div class="t" style="left:253.60000000000002px;top:777.00px;font-size:6.4px;color:#555;letter-spacing:0.000px;">18/02</div>
<div class="t" style="left:286.4px;top:777.00px;font-size:6.4px;color:#555;letter-spacing:0.000px;">19/02</div>
<div class="t" style="left:319.2px;top:777.00px;font-size:6.4px;color:#555;letter-spacing:0.000px;">20/02</div>
</div></div>
</div>
</body>
</html>
